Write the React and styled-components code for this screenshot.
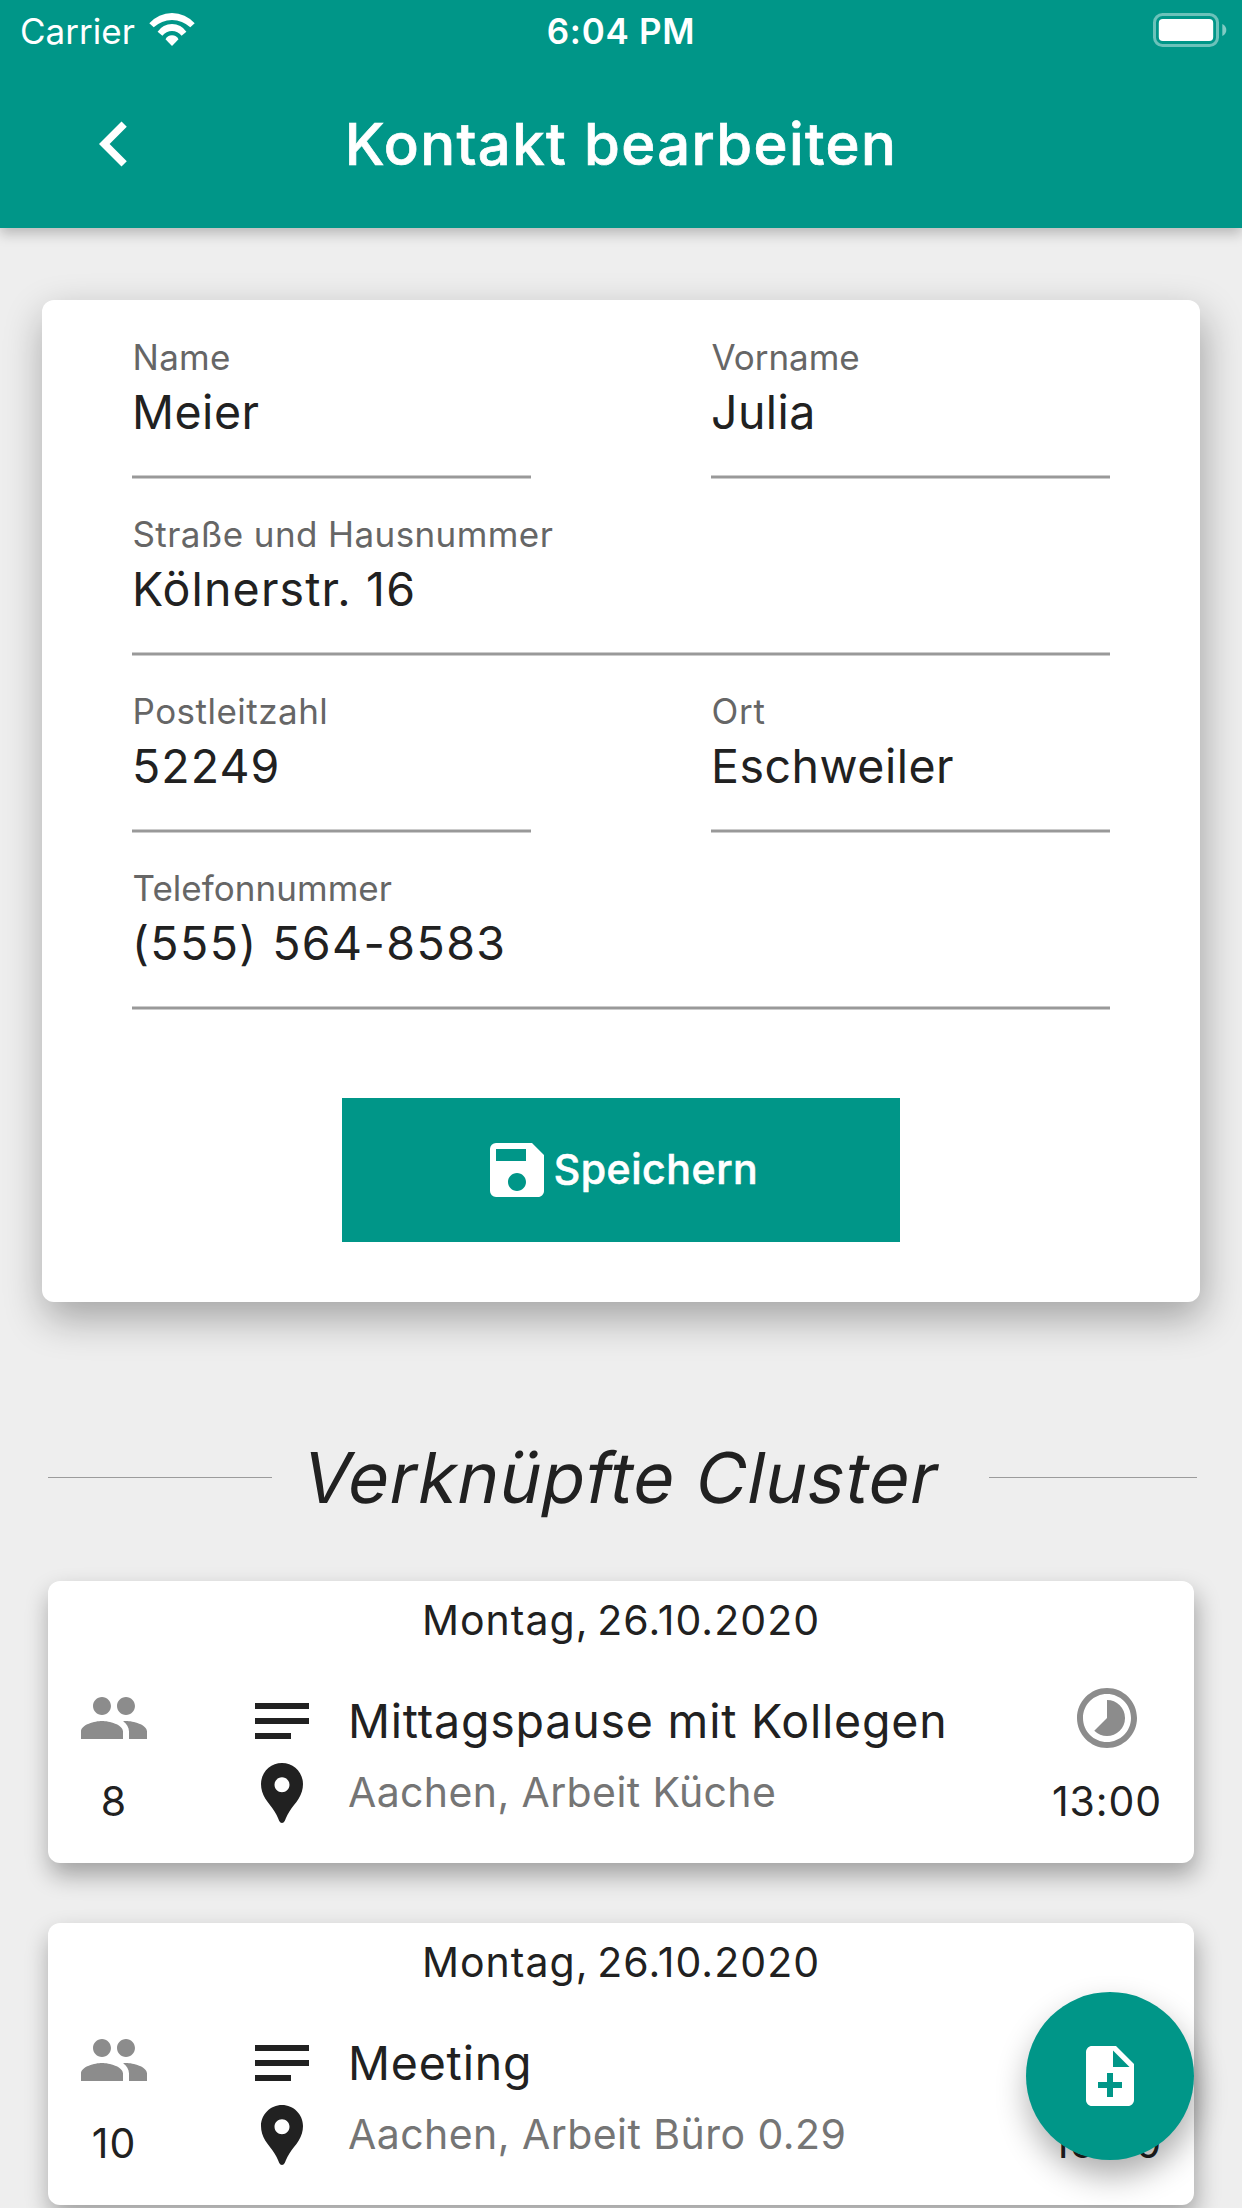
import React from "react";
import styled, { createGlobalStyle } from "styled-components";
import {
  MdChevronLeft,
  MdNoteAdd,
  MdNotes,
  MdPeople,
  MdSave,
  MdTimelapse,
} from "react-icons/md";

const GlobalStyle = createGlobalStyle`
  * { box-sizing: border-box; }
  body {
    margin: 0;
    background: #eeeeee;
    color: #212121;
    font-family: Inter, "Liberation Sans", sans-serif;
    overflow: hidden;
  }
  svg { display: block; flex: none; }
`;

const Screen = styled.div`
  width: 1242px;
  height: 2208px;
  overflow: hidden;
  background: #eeeeee;
`;

const Header = styled.header`
  height: 228px;
  background: #009688;
  color: #fff;
  box-shadow: 0 6px 12px rgba(0, 0, 0, 0.22);
`;

const StatusBar = styled.div`
  display: grid;
  grid-template-columns: 1fr auto 1fr;
  align-items: center;
  height: 60px;
  padding: 0 15px 0 20px;
`;

const Carrier = styled.div`
  display: flex;
  align-items: center;
  gap: 14px;

  svg { margin-bottom: 2px; }
`;

const StatusText = styled.span`
  padding-top: 2px;
  padding-right: ${(p) => (p.$strong ? 5 : 0)}px;
  font-size: 35px;
  line-height: 44px;
  font-weight: ${(p) => (p.$strong ? 600 : 400)};
  letter-spacing: ${(p) => (p.$strong ? 0.71 : 0.04)}px;
`;

const BatterySlot = styled.div`
  display: flex;
  justify-content: flex-end;
`;

const AppBar = styled.div`
  display: grid;
  grid-template-columns: 90px 1fr 90px;
  align-items: center;
  height: 168px;
  padding: 0 69px;
`;

const BackButton = styled.button`
  padding: 0;
  border: 0;
  background: none;
  color: inherit;
`;

const Title = styled.h1`
  margin: 0;
  text-align: center;
  font-size: 58px;
  line-height: 70px;
  font-weight: 500;
  letter-spacing: 1.38px;
  -webkit-text-stroke: 0.7px currentColor;
`;

const ContactCard = styled.section`
  margin: 72px 42px 0;
  padding: 35px 90px 60px;
  border-radius: 12px;
  background: #fff;
  box-shadow: 3px 16px 40px rgba(0, 0, 0, 0.32);
`;

const Fields = styled.div`
  display: grid;
  grid-template-columns: 399px 399px;
  column-gap: 180px;
  row-gap: 33px;
`;

const FieldBox = styled.div`
  grid-column: ${(p) => (p.$wide ? "1 / -1" : "auto")};
`;

const Label = styled.div`
  margin-bottom: 5px;
  padding-left: 0.5px;
  color: #666666;
  font-size: 35px;
  line-height: 44px;
  letter-spacing: ${(p) => p.$spacing}px;
`;

const Value = styled.div`
  margin-bottom: 35px;
  font-size: 46.5px;
  line-height: 56px;
  letter-spacing: ${(p) => p.$spacing}px;
`;

const Underline = styled.div`
  height: 4px;
  background: #999999;
  border: solid #cccccc;
  border-width: 1px 0;
`;

const SaveButton = styled.button`
  display: flex;
  align-items: center;
  justify-content: center;
  gap: 1px;
  width: 558px;
  height: 144px;
  margin: 88px auto 0;
  padding: 0 3px 0 0;
  border: 0;
  background: #009688;
  color: #fff;
  font: 500 41px/50px Inter, "Liberation Sans", sans-serif;
  letter-spacing: 0.55px;
`;

const ButtonText = styled.span`
  padding-bottom: 2px;
  -webkit-text-stroke: 0.6px currentColor;
`;

const SectionHeading = styled.div`
  display: flex;
  align-items: center;
  height: 101px;
  margin: 125px 45px 53px 48px;
`;

const Rule = styled.div`
  flex: 0 0 ${(p) => p.$width}px;
  height: 1px;
  background: #9b9b9b;
`;

const HeadingText = styled.h2`
  flex: 1;
  min-width: 0;
  margin: 0;
  padding-left: 27px;
  white-space: nowrap;
  font-size: 70px;
  line-height: 90px;
  font-weight: 400;
  letter-spacing: 0.88px;
  transform: skewX(-11deg);
  transform-origin: 0 70px;
`;

const ClusterList = styled.div`
  display: grid;
  gap: 60px;
  margin: 0 48px;
`;

const ClusterCard = styled.article`
  height: 282px;
  padding-top: 14px;
  border-radius: 12px;
  background: #fff;
  box-shadow: 2px 12px 24px rgba(0, 0, 0, 0.33);
`;

const DateText = styled.div`
  text-align: center;
  font-size: 41px;
  line-height: 51px;
  letter-spacing: 1.05px;
  word-spacing: -4px;
`;

const ClusterBody = styled.div`
  display: grid;
  grid-template-columns: 132px 1fr 174px;
`;

const Side = styled.div`
  display: flex;
  flex-direction: column;
  align-items: center;
  gap: 22px;
  padding-top: 36px;
  font-size: 41px;
  line-height: 50px;
  letter-spacing: 0.9px;

  svg { color: #8c8c8c; }
`;

const Details = styled.div`
  padding: 39px 0 0 66px;
`;

const DetailLine = styled.div`
  display: flex;
  align-items: center;
  gap: 30px;
  height: 72px;
  white-space: nowrap;
`;

const ClusterName = styled.span`
  font-size: 46.5px;
  line-height: 56px;
  letter-spacing: 0.8px;
`;

const Place = styled.span`
  padding-bottom: 2px;
  color: #757575;
  font-size: 41px;
  line-height: 50px;
  letter-spacing: ${(p) => p.$spacing}px;
`;

const Fab = styled.button`
  position: fixed;
  top: 1992px;
  left: 1026px;
  display: grid;
  place-items: center;
  width: 168px;
  height: 168px;
  padding: 0;
  border: 0;
  border-radius: 50%;
  background: #009688;
  color: #fff;
  box-shadow: 2px 16px 32px rgba(0, 0, 0, 0.32);
`;

const WifiIcon = () => (
  <svg width="46" height="33" viewBox="0 0 46 33" fill="#fff">
    <path d="M0.3 10.3A30.2 30.2 0 0 1 45.7 10.3L41.3 14.3A26.6 26.6 0 0 0 4.7 14.3Z" />
    <path d="M8.6 18.7A17.3 17.3 0 0 1 37.4 18.7L32.6 22.7A12.2 12.2 0 0 0 13.4 22.7Z" />
    <path d="M16.5 26.3A7.3 7.3 0 0 1 29.5 26.3L23 32.9Z" />
  </svg>
);

const BatteryIcon = () => (
  <svg width="74" height="34" viewBox="0 0 74 34">
    <rect x="1.5" y="1.5" width="63" height="31" rx="8" fill="none" stroke="#fff" strokeOpacity="0.42" strokeWidth="3" />
    <rect x="5.8" y="6" width="54.4" height="22" rx="4" fill="#fff" />
    <path d="M69.3 11C71.9 12 73.3 14.4 73.3 17S71.9 22 69.3 23Z" fill="#fff" fillOpacity="0.5" />
  </svg>
);

const PinIcon = () => (
  <svg width="72" height="72" viewBox="0 0 24 24" fill="currentColor">
    <path d="M12 2C8.13 2 5 5.13 5 9c0 1.74.5 3.37 1.41 4.84.95 1.54 2.2 2.86 3.16 4.4.47.75.81 1.45 1.17 2.26.26.55.47 1.5 1.26 1.5s1-.95 1.25-1.5c.37-.81.7-1.51 1.17-2.26.96-1.53 2.21-2.85 3.16-4.4C18.5 12.37 19 10.74 19 9c0-3.87-3.13-7-7-7zm0 9.75c-1.38 0-2.5-1.12-2.5-2.5s1.12-2.5 2.5-2.5 2.5 1.12 2.5 2.5-1.12 2.5-2.5 2.5z" />
  </svg>
);

const fields = [
  { label: "Name", labelSpacing: 0.27, value: "Meier", valueSpacing: 0.5 },
  { label: "Vorname", labelSpacing: -0.05, value: "Julia", valueSpacing: 0.4 },
  { label: "Straße und Hausnummer", labelSpacing: 0.4, value: "Kölnerstr. 16", valueSpacing: 1.15, wide: true },
  { label: "Postleitzahl", labelSpacing: 0.48, value: "52249", valueSpacing: 1.08 },
  { label: "Ort", labelSpacing: 0.7, value: "Eschweiler", valueSpacing: 0.5 },
  { label: "Telefonnummer", labelSpacing: 0.04, value: "(555) 564-8583", valueSpacing: 1.4, wide: true },
];

const clusters = [
  { date: "Montag, 26.10.2020", people: 8, name: "Mittagspause mit Kollegen", place: "Aachen, Arbeit Küche", placeSpacing: 0.38, time: "13:00" },
  { date: "Montag, 26.10.2020", people: 10, name: "Meeting", place: "Aachen, Arbeit Büro 0.29", placeSpacing: 0.44, time: "16:00" },
];

export default function App() {
  return (
    <Screen>
      <GlobalStyle />
      <Header>
        <StatusBar>
          <Carrier>
            <StatusText>Carrier</StatusText>
            <WifiIcon />
          </Carrier>
          <StatusText $strong>6:04 PM</StatusText>
          <BatterySlot>
            <BatteryIcon />
          </BatterySlot>
        </StatusBar>
        <AppBar>
          <BackButton aria-label="Zurück">
            <MdChevronLeft size={90} />
          </BackButton>
          <Title>Kontakt bearbeiten</Title>
        </AppBar>
      </Header>

      <ContactCard>
        <Fields>
          {fields.map((f) => (
            <FieldBox key={f.label} $wide={f.wide}>
              <Label $spacing={f.labelSpacing}>{f.label}</Label>
              <Value $spacing={f.valueSpacing}>{f.value}</Value>
              <Underline />
            </FieldBox>
          ))}
        </Fields>
        <SaveButton>
          <MdSave size={72} />
          <ButtonText>Speichern</ButtonText>
        </SaveButton>
      </ContactCard>

      <SectionHeading>
        <Rule $width={224} />
        <HeadingText>Verknüpfte Cluster</HeadingText>
        <Rule $width={208} />
      </SectionHeading>

      <ClusterList>
        {clusters.map((c) => (
          <ClusterCard key={c.name}>
            <DateText>{c.date}</DateText>
            <ClusterBody>
              <Side>
                <MdPeople size={72} />
                <span>{c.people}</span>
              </Side>
              <Details>
                <DetailLine>
                  <MdNotes size={72} />
                  <ClusterName>{c.name}</ClusterName>
                </DetailLine>
                <DetailLine>
                  <PinIcon />
                  <Place $spacing={c.placeSpacing}>{c.place}</Place>
                </DetailLine>
              </Details>
              <Side>
                <MdTimelapse size={72} />
                <span>{c.time}</span>
              </Side>
            </ClusterBody>
          </ClusterCard>
        ))}
      </ClusterList>

      <Fab aria-label="Cluster hinzufügen">
        <MdNoteAdd size={72} />
      </Fab>
    </Screen>
  );
}
